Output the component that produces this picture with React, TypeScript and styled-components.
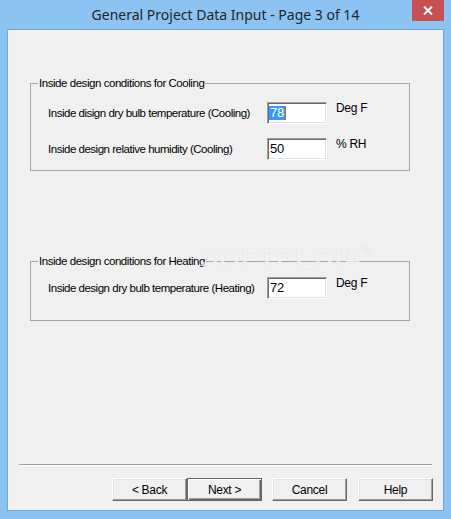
import React from 'react';
import styled, { createGlobalStyle } from 'styled-components';

const GlobalStyle = createGlobalStyle`
  html, body {
    margin: 0;
    padding: 0;
    background: #8cc3f3;
  }
`;

const STDWindow = styled.div`
  display: flex;
  flex-direction: column;
  width: 451px;
  height: 519px;
  background-color: #8cc3f3;
  font-family: 'Liberation Sans', Arial, sans-serif;
`;

const STDTitleBar = styled.header`
  display: grid;
  grid-template-columns: 1fr auto 1fr;
  align-items: start;
  height: 29px;
  flex-shrink: 0;
`;

const STDTitle = styled.h1`
  grid-column: 2;
  align-self: center;
  margin: 0;
  font-family: 'Noto Sans', 'Open Sans', sans-serif;
  font-size: 14px;
  font-weight: 400;
  color: #262626;
  white-space: nowrap;
`;

const STDCloseButton = styled.button`
  grid-column: 3;
  justify-self: end;
  display: flex;
  align-items: center;
  justify-content: center;
  width: 32px;
  height: 21px;
  margin-right: 7px;
  padding: 0;
  border: none;
  background-color: #c75050;
`;

const STDClient = styled.main`
  position: relative;
  display: flex;
  flex-direction: column;
  flex: 1;
  margin: 0 7px 8px;
  border: 1px solid #73a8da;
  background-color: #f0f0f0;
`;

const STDGroup = styled.fieldset<{ top: number }>`
  width: 380px;
  box-sizing: border-box;
  margin: ${({ top }) => top}px 0 0 22px;
  padding: 0;
  border: 1px solid #a6a6a6;
`;

const STDLegend = styled.legend`
  margin-left: 7px;
  padding: 0 1px;
  font-size: 11.5px;
  line-height: 13px;
  letter-spacing: -0.45px;
  color: #000;
`;

const STDGroupBody = styled.div<{ padTop: number; padBottom: number }>`
  display: flex;
  flex-direction: column;
  gap: 14px;
  padding: ${({ padTop, padBottom }) => `${padTop}px 0 ${padBottom}px 17px`};
`;

const STDRow = styled.div`
  display: flex;
  align-items: center;
  height: 22px;
`;

const STDLabel = styled.span`
  width: 219px;
  flex-shrink: 0;
  font-size: 11.5px;
  line-height: 13px;
  letter-spacing: -0.48px;
  color: #000;
`;

const STDTextBox = styled.div`
  display: flex;
  align-items: center;
  box-sizing: border-box;
  width: 60px;
  height: 22px;
  padding: 0;
  border: 1px solid;
  border-color: #a0a0a0 #ffffff #ffffff #a0a0a0;
  box-shadow: inset 1px 1px 0 #696969, inset -1px -1px 0 #e3e3e3;
  background-color: #fff;
  font-size: 13px;
  line-height: 14px;
  letter-spacing: -0.3px;
  color: #000;
`;

const STDValue = styled.span<{ isSelected?: boolean }>`
  margin-left: 1px;
  padding: 0 1px;
  background-color: ${({ isSelected }) => (isSelected ? '#3399ff' : 'transparent')};
  color: ${({ isSelected }) => (isSelected ? '#fff' : '#000')};
  border-right: 1px solid ${({ isSelected }) => (isSelected ? '#cc6a00' : 'transparent')};
`;

const STDUnit = styled.span`
  align-self: flex-start;
  margin: 0 0 0 9px;
  font-size: 12px;
  line-height: 13px;
  letter-spacing: -0.3px;
  color: #000;
`;

const STDWatermark = styled.div`
  position: absolute;
  left: 192px;
  top: 214px;
  font-family: 'Liberation Sans', Arial, sans-serif;
  font-size: 27px;
  font-weight: 700;
  letter-spacing: 1px;
  color: rgba(255, 255, 255, 0.7);
  text-shadow: 0 0 1px rgba(0, 0, 0, 0.12);
  pointer-events: none;

  sup {
    font-size: 10px;
    vertical-align: top;
  }
`;

const STDFooter = styled.footer`
  display: flex;
  flex-direction: column;
  margin-top: auto;
  padding-bottom: 9px;
`;

const STDSeparator = styled.hr`
  margin: 0 11px;
  height: 0;
  border: none;
  border-top: 1px solid #a0a0a0;
  border-bottom: 1px solid #fff;
`;

const STDButtonRow = styled.div`
  display: flex;
  justify-content: flex-end;
  margin-top: 12px;
  padding-right: 10px;
`;

const STDButton = styled.button<{ isDefault?: boolean; gapLeft?: number }>`
  box-sizing: border-box;
  width: 75px;
  height: 23px;
  margin-left: ${({ gapLeft }) => gapLeft || 0}px;
  padding: 0;
  border: 1px solid;
  border-color: ${({ isDefault }) =>
    isDefault ? '#646464' : '#ffffff #696969 #696969 #ffffff'};
  box-shadow: ${({ isDefault }) =>
    isDefault
      ? 'inset 1px 1px 0 #ffffff, inset -1px -1px 0 #696969, inset -2px -2px 0 #a0a0a0'
      : 'inset -1px -1px 0 #a0a0a0, inset 1px 1px 0 #e3e3e3'};
  background-color: #f0f0f0;
  font-family: 'Liberation Sans', Arial, sans-serif;
  font-size: 12px;
  letter-spacing: -0.3px;
  color: #000;
`;

const App: React.FC = () => {
  return (
    <>
      <GlobalStyle />
      <STDWindow>
        <STDTitleBar>
          <STDTitle>General Project Data Input - Page 3 of 14</STDTitle>
          <STDCloseButton aria-label='close'>
            <svg width='10' height='9' viewBox='0 0 10 9'>
              <path d='M1 0.5 L9 8.5 M9 0.5 L1 8.5' stroke='#fff' strokeWidth='2' />
            </svg>
          </STDCloseButton>
        </STDTitleBar>
        <STDClient>
          <STDGroup top={47}>
            <STDLegend>Inside design conditions for Cooling</STDLegend>
            <STDGroupBody padTop={12} padBottom={10}>
              <STDRow>
                <STDLabel>Inside disign dry bulb temperature (Cooling)</STDLabel>
                <STDTextBox>
                  <STDValue isSelected>78</STDValue>
                </STDTextBox>
                <STDUnit>Deg F</STDUnit>
              </STDRow>
              <STDRow>
                <STDLabel>Inside design relative humidity (Cooling)</STDLabel>
                <STDTextBox>
                  <STDValue>50</STDValue>
                </STDTextBox>
                <STDUnit>% RH</STDUnit>
              </STDRow>
            </STDGroupBody>
          </STDGroup>
          <STDGroup top={84}>
            <STDLegend>Inside design conditions for Heating</STDLegend>
            <STDGroupBody padTop={9} padBottom={21}>
              <STDRow>
                <STDLabel>Inside design dry bulb temperature (Heating)</STDLabel>
                <STDTextBox>
                  <STDValue>72</STDValue>
                </STDTextBox>
                <STDUnit>Deg F</STDUnit>
              </STDRow>
            </STDGroupBody>
          </STDGroup>
          <STDWatermark>
            SOFTPEDIA<sup>®</sup>
          </STDWatermark>
          <STDFooter>
            <STDSeparator />
            <STDButtonRow>
              <STDButton>&lt; Back</STDButton>
              <STDButton isDefault>Next &gt;</STDButton>
              <STDButton gapLeft={10}>Cancel</STDButton>
              <STDButton gapLeft={11}>Help</STDButton>
            </STDButtonRow>
          </STDFooter>
        </STDClient>
      </STDWindow>
    </>
  );
};

export default App;
